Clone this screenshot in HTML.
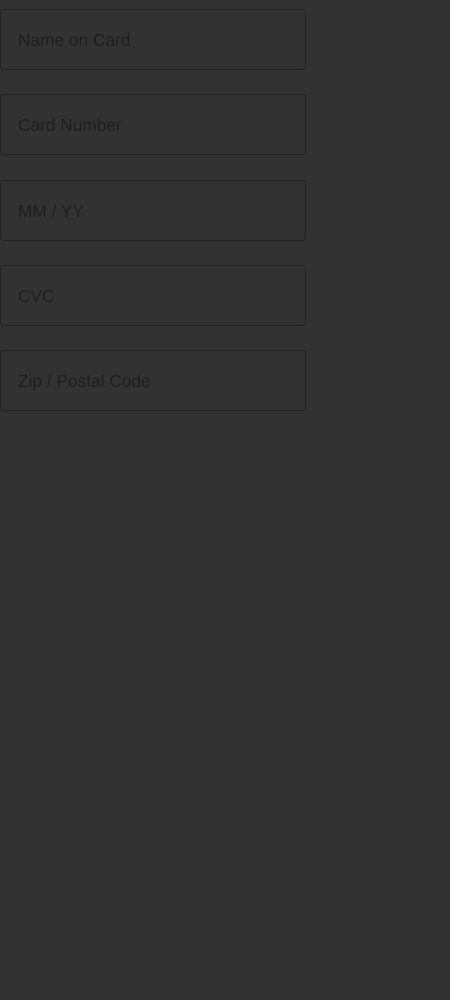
<!DOCTYPE html>
<html><head><style>
html,body{margin:0;padding:0;background:#323232;width:450px;height:1000px;overflow:hidden}
.f{position:absolute;left:0;border:1px solid #222;border-radius:3px;font-family:"Liberation Sans",sans-serif;font-size:17.3px;color:#1e1e1e;line-height:61px;padding-left:17px;box-sizing:border-box;width:306px;height:61px}
</style></head><body>
<div class="f" style="top:9px">Name on Card</div>
<div class="f" style="top:94px">Card Number</div>
<div class="f" style="top:180px">MM / YY</div>
<div class="f" style="top:265px">CVC</div>
<div class="f" style="top:350px">Zip / Postal Code</div>
</body></html>
